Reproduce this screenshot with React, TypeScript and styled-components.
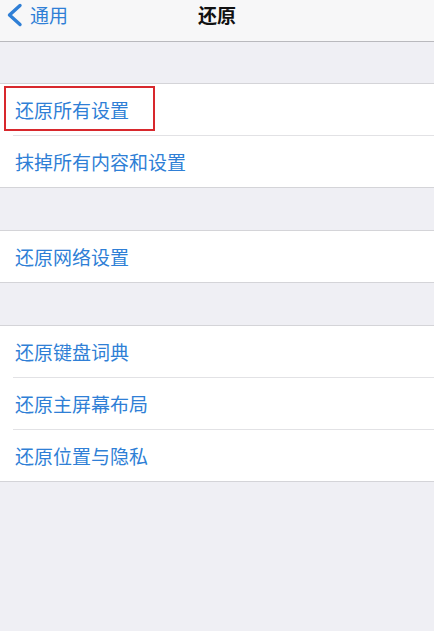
import React from 'react';
import styled, { createGlobalStyle } from 'styled-components';

const GlobalStyle = createGlobalStyle`
  html, body {
    margin: 0;
    padding: 0;
    background: #efeff4;
    font-family: "Noto Sans CJK SC", "Noto Sans", sans-serif;
  }
`;

const Page = styled.div`
  width: 434px;
  min-height: 631px;
  background: #efeff4;
`;

const NavBar = styled.div`
  height: 42px;
  box-sizing: border-box;
  padding-top: 3px;
  background: #f7f7f8;
  border-bottom: 1px solid #b9b9bd;
  display: grid;
  grid-template-columns: 1fr auto 1fr;
  align-items: start;
`;

const BackButton = styled.div`
  display: flex;
  align-items: center;
  gap: 6px;
  padding-left: 5px;
  color: #2f7fd6;
  font-size: 19px;
  line-height: 24px;
`;

const Title = styled.div`
  font-size: 19px;
  font-weight: 700;
  line-height: 24px;
  color: #111;
`;

const Gap = styled.div<{ $h: number }>`
  height: ${(p) => p.$h}px;
`;

const Group = styled.div`
  background: #fff;
  border-top: 1px solid #d4d4d8;
  border-bottom: 1px solid #d4d4d8;
`;

const Row = styled.div<{ $last?: boolean }>`
  position: relative;
  height: 51px;
  display: flex;
  align-items: center;
  padding-left: 15px;
  font-size: 19px;
  color: #2f7fd6;
  &::after {
    content: '';
    display: ${(p) => (p.$last ? 'none' : 'block')};
    position: absolute;
    left: 13px;
    right: 0;
    bottom: -1px;
    height: 1px;
    background: #e2e2e5;
  }
  & + & {
    margin-top: 1px;
  }
`;

const Highlight = styled.div`
  position: absolute;
  left: 4px;
  top: 2px;
  width: 151px;
  height: 45px;
  border: 2px solid #d8282d;
  box-sizing: border-box;
  pointer-events: none;
`;

const groups: string[][] = [
  ['还原所有设置', '抹掉所有内容和设置'],
  ['还原网络设置'],
  ['还原键盘词典', '还原主屏幕布局', '还原位置与隐私'],
];

export default function App() {
  return (
    <>
      <GlobalStyle />
      <Page>
        <NavBar>
          <BackButton>
            <svg width="19" height="24" viewBox="0 0 19 24">
              <path d="M15 2.5 L4.5 12 L15 21.5" fill="none" stroke="#2f7fd6" strokeWidth="3.4" strokeLinecap="round" strokeLinejoin="round" />
            </svg>
            通用
          </BackButton>
          <Title>还原</Title>
          <div />
        </NavBar>
        {groups.map((items, gi) => (
          <React.Fragment key={gi}>
            <Gap $h={gi === 0 ? 41 : 42} />
            <Group>
              {items.map((label, i) => (
                <Row key={label} $last={i === items.length - 1}>
                  {label}
                  {gi === 0 && i === 0 && <Highlight />}
                </Row>
              ))}
            </Group>
          </React.Fragment>
        ))}
      </Page>
    </>
  );
}
